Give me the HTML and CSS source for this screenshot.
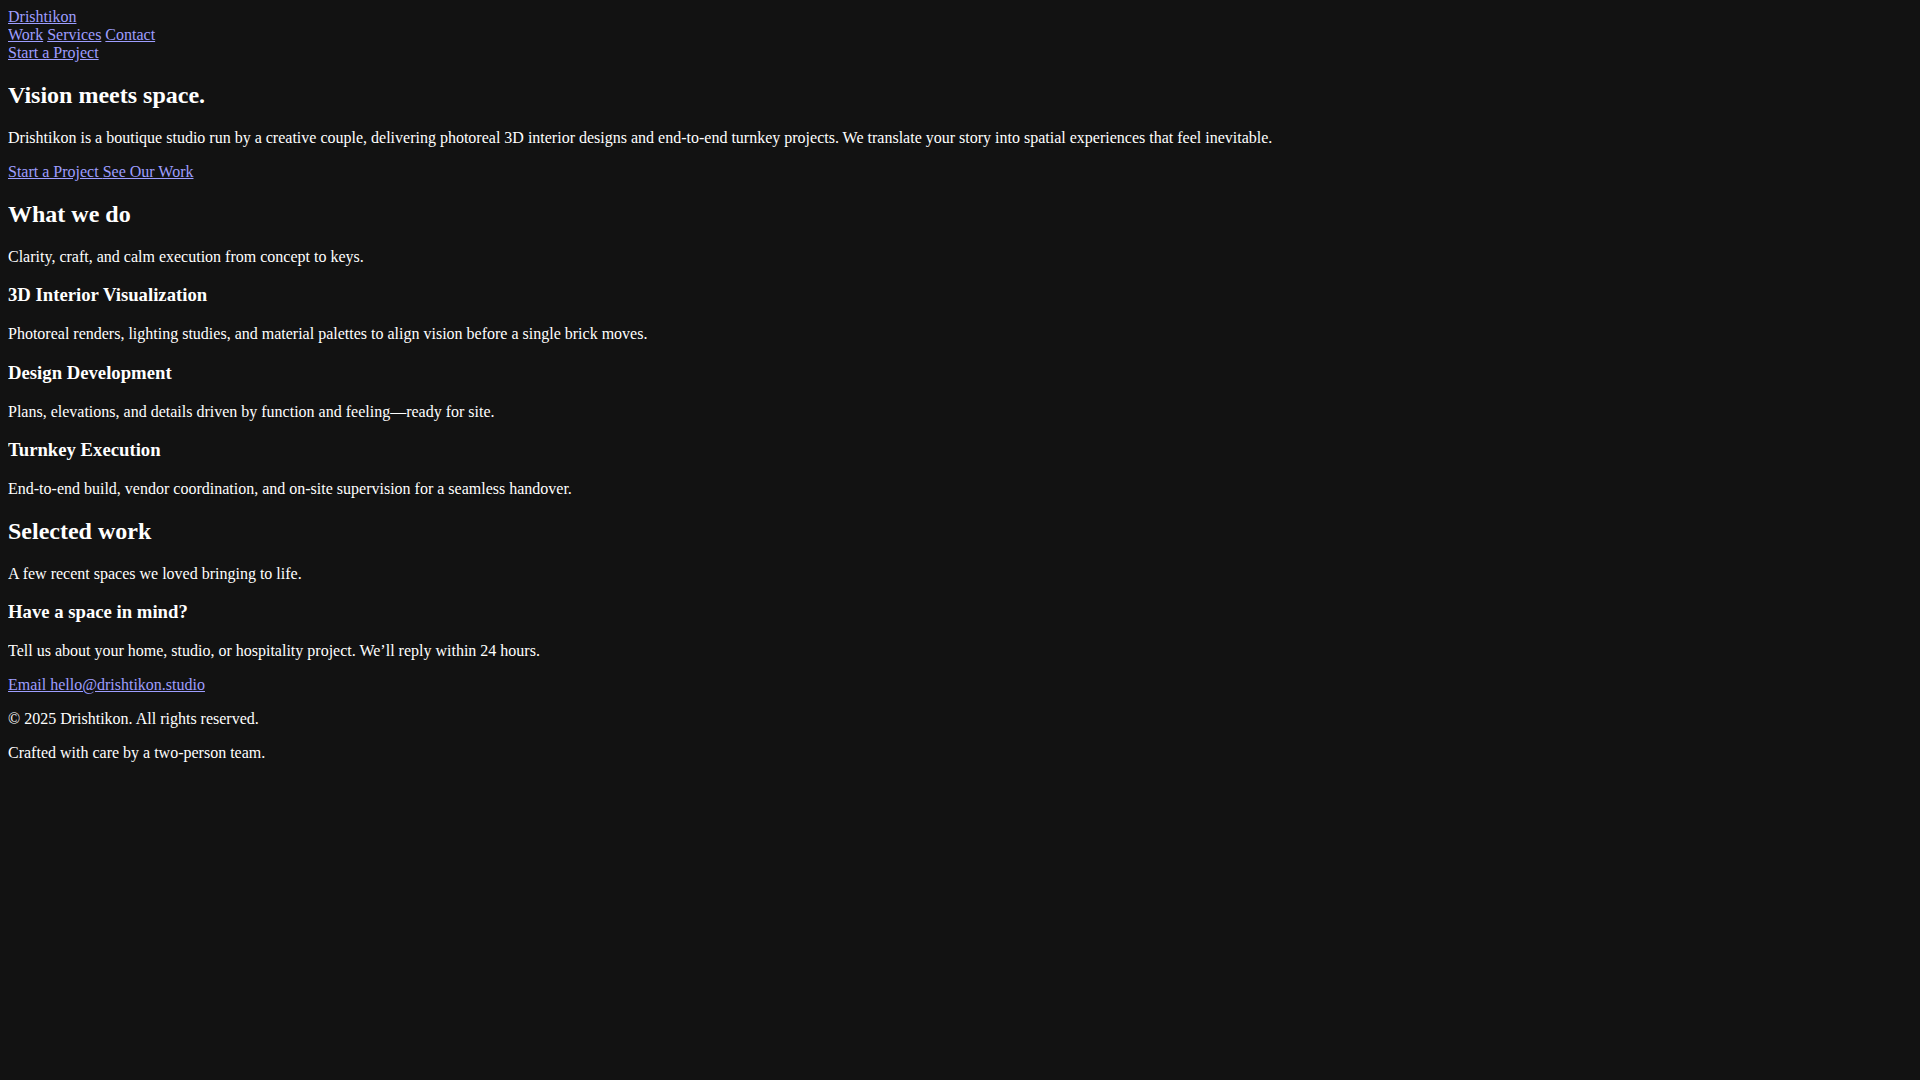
FILE: index.html
```html
<!DOCTYPE html>
<html lang="en">
<head>
<meta charset="utf-8">
<title>Drishtikon</title>
<link rel="stylesheet" href="styles.css">
</head>
<body>
<header class="site-header">
  <div class="brand"><a href="#">Drishtikon</a></div>
  <nav class="nav"><a href="#work">Work</a> <a href="#services">Services</a> <a href="#contact">Contact</a></nav>
  <div class="cta"><a href="#contact">Start a Project</a></div>
</header>
<main>
  <section class="hero">
    <h1>Vision meets space.</h1>
    <p>Drishtikon is a boutique studio run by a creative couple, delivering photoreal 3D interior designs and end-to-end turnkey projects. We translate your story into spatial experiences that feel inevitable.</p>
    <p class="actions"><a href="#contact">Start a Project </a><a href="#work">See Our Work</a></p>
  </section>
  <section id="services" class="services">
    <h2>What we do</h2>
    <p>Clarity, craft, and calm execution from concept to keys.</p>
    <div class="service-list">
      <article class="service">
        <h3>3D Interior Visualization</h3>
        <p>Photoreal renders, lighting studies, and material palettes to align vision before a single brick moves.</p>
      </article>
      <article class="service">
        <h3>Design Development</h3>
        <p>Plans, elevations, and details driven by function and feeling—ready for site.</p>
      </article>
      <article class="service">
        <h3>Turnkey Execution</h3>
        <p>End-to-end build, vendor coordination, and on-site supervision for a seamless handover.</p>
      </article>
    </div>
  </section>
  <section id="work" class="work">
    <h2>Selected work</h2>
    <p>A few recent spaces we loved bringing to life.</p>
    <div class="work-grid"></div>
  </section>
  <section id="contact" class="contact">
    <h3>Have a space in mind?</h3>
    <p>Tell us about your home, studio, or hospitality project. We’ll reply within 24 hours.</p>
    <p><a href="mailto:hello@drishtikon.studio">Email hello@drishtikon.studio</a></p>
  </section>
</main>
<footer class="site-footer">
  <p>© 2025 Drishtikon. All rights reserved.</p>
  <p>Crafted with care by a two-person team.</p>
</footer>
</body>
</html>
```

FILE: styles.css
```css
:root {
  color-scheme: dark;
}

body {
  margin: 8px;
  background-color: #121212;
  color: #ffffff;
  font-family: "Liberation Serif", "Times New Roman", serif;
  font-size: 16px;
}

a {
  color: #9e9eff;
}

.hero h1,
.services h2,
.work h2 {
  font-size: 1.5em;
  margin: 0.83em 0;
  font-weight: bold;
}

.service h3,
.contact h3 {
  font-size: 1.17em;
  margin: 1em 0;
  font-weight: bold;
}

p {
  margin: 1em 0;
}
```
